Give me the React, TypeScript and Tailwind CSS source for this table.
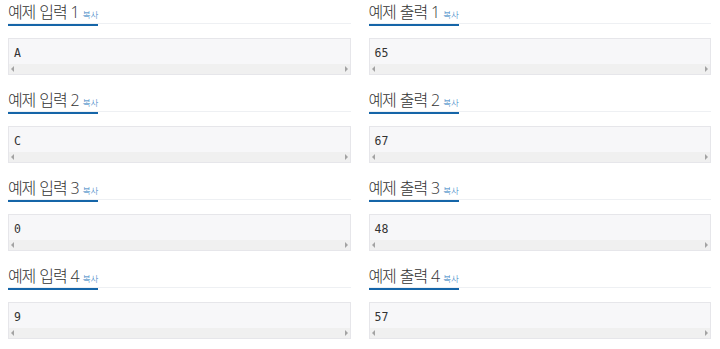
import React from "react";

const rows = [
  { n: 1, input: "A", output: "65" },
  { n: 2, input: "C", output: "67" },
  { n: 3, input: "0", output: "48" },
  { n: 4, input: "9", output: "57" },
];

function Block({ title, value }: { title: string; value: string }) {
  return (
    <div className="h-[88px]">
      <div className="border-b border-[#eef0f3] h-[24px]">
        <h2
          className="inline-block h-[24px] border-b-2 border-[#1565a8] text-[16px] leading-[21px] font-light tracking-[-1.1px] [word-spacing:1px] text-[#333]"
          style={{ fontFamily: '"Open Sans", "Noto Sans CJK KR", sans-serif' }}
        >
          {title}{" "}
          <a className="text-[8.5px] tracking-[0px] text-[#2a7ac0]">복사</a>
        </h2>
      </div>
      <div className="mt-[14px] border border-[#e6e6ea] bg-[#f7f7f9] h-[37px] flex flex-col">
        <div
          className="flex-1 pl-[5px] pt-[7px] text-[11.5px] leading-[15px] text-[#333]"
          style={{ fontFamily: '"DejaVu Sans Mono", "Liberation Mono", monospace' }}
        >
          {value}
        </div>
        <div className="h-[10px] bg-[#f0f0f0] flex items-center justify-between px-[2px]">
          <span className="block w-0 h-0 border-y-[3px] border-y-transparent border-r-[3px] border-r-[#a3a3a3]" />
          <span className="block w-0 h-0 border-y-[3px] border-y-transparent border-l-[3px] border-l-[#a3a3a3]" />
        </div>
      </div>
    </div>
  );
}

export default function App() {
  return (
    <div className="w-[720px] h-[349px] bg-white overflow-hidden pl-[8px] pr-[9px] grid grid-cols-2 gap-x-[18px]">
      <div>
        {rows.map((r) => (
          <Block key={r.n} title={`예제 입력 ${r.n}`} value={r.input} />
        ))}
      </div>
      <div>
        {rows.map((r) => (
          <Block key={r.n} title={`예제 출력 ${r.n}`} value={r.output} />
        ))}
      </div>
    </div>
  );
}
